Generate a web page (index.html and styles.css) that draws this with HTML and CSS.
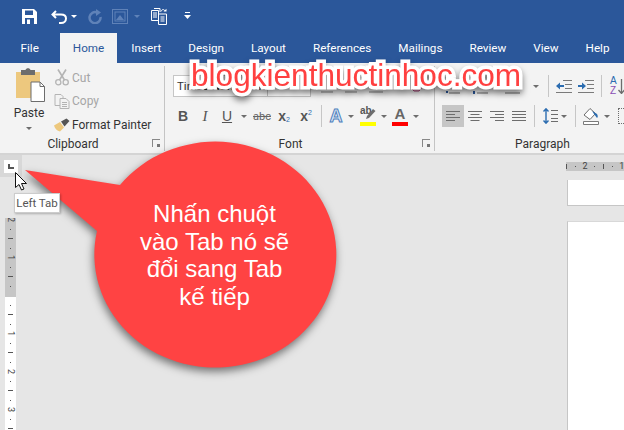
FILE: index.html
```html
<!DOCTYPE html>
<html lang="vi">
<head>
    <meta charset="UTF-8">
    <meta name="viewport" content="width=device-width, initial-scale=1.0">
    <title>Word - Left Tab</title>
    <link rel="stylesheet" href="styles.css">
</head>
<body>

<div class="app">
    <div class="qat">
        <svg class="qat-save" width="15" height="15" viewBox="0 0 15 15"><path d="M0 0H12L15 3V15H0Z" fill="#fff"/><rect x="3" y="1.5" width="8" height="4.5" fill="#2b579a"/><rect x="3" y="9" width="9" height="6" fill="#2b579a"/><rect x="5" y="10.500" width="3" height="4.500" fill="#fff"/></svg>
        <svg class="qat-undo" width="16" height="14" viewBox="0 0 16 14"><path d="M5 1L1.500 4.500L5 8M2 4.500H10C14 4.500 15 7 15 8.500C15 11 13 13 10 13H8" fill="none" stroke="#fff" stroke-width="2"/></svg>
        <span class="caret caret-white qat-caret"></span>
        <svg class="qat-redo" width="14" height="15" viewBox="0 0 14 15"><path d="M9 3.500A5.500 5.500 0 1 0 12.500 8" fill="none" stroke="#5f82b8" stroke-width="2.500"/><path d="M8 0V7L13 3.500Z" fill="#5f82b8"/></svg>
        <svg class="qat-image" width="16" height="15" viewBox="0 0 16 15"><rect x=".5" y=".5" width="15" height="14" fill="none" stroke="#5f82b8"/><rect x="3" y="3" width="10" height="9" fill="none" stroke="#5f82b8"/><path d="M4 11L8 6L12 11Z" fill="#5f82b8"/></svg>
        <span class="caret caret-dim qat-caret2"></span>
        <svg class="qat-list" width="17" height="17" viewBox="0 0 17 17"><path d="M.5 2.500H7.500V12.500H.5Z" fill="none" stroke="#fff"/><path d="M3 .5H9V4" fill="none" stroke="#fff"/><path d="M2 5H6M2 7H6M2 9H6" stroke="#fff"/><path d="M7.500 6H15.500V16.500H7.500Z" fill="#2b579a" stroke="#fff"/><path d="M9.500 9H13.500M9.500 11H13.500M9.500 13H13.500" stroke="#fff"/><path d="M10 3.500C11 1 13 1 14 3" fill="none" stroke="#fff"/><path d="M12.500 3.500H15.500V.8Z" fill="#fff"/></svg>
        <svg class="qat-custom" width="7" height="9" viewBox="0 0 7 9"><path d="M1 .5H6" stroke="#fff"/><path d="M0 3H7L3.500 7Z" fill="#fff"/></svg>
    </div>

    <div class="tabs">
        <span class="tab tab-file">File</span>
        <span class="tab tab-active">Home</span>
        <span class="tab">Insert</span>
        <span class="tab">Design</span>
        <span class="tab">Layout</span>
        <span class="tab">References</span>
        <span class="tab">Mailings</span>
        <span class="tab">Review</span>
        <span class="tab">View</span>
        <span class="tab">Help</span>
    </div>

    <div class="ribbon">
        <div class="group group-clipboard">
            <div class="group-body clip-body">
                <div class="paste">
                    <svg width="29" height="34" viewBox="0 0 29 34"><path d="M0 4H24V30H0Z" fill="#edc87e"/><path d="M5 2H9.500C10 -.5 14 -.5 14.500 2H19V7H5Z" fill="#6d6d6d"/><path d="M15 14H24L28.500 18.500V33.500H15Z" fill="#fff" stroke="#6d6d6d"/><path d="M24 14V18.500H28.500" fill="none" stroke="#6d6d6d"/></svg>
                    <span class="paste-label">Paste</span>
                    <span class="caret"></span>
                </div>
                <div class="clip-list">
                    <div class="clip-row clip-off">
                        <svg width="14" height="17" viewBox="0 0 14 17"><path d="M3 .5L9.500 11M11 .5L4.500 11" stroke="#b4b4b4" stroke-width="1.600"/><circle cx="3.300" cy="13.300" r="2.600" fill="none" stroke="#b4b4b4" stroke-width="1.300"/><circle cx="10.700" cy="13.300" r="2.600" fill="none" stroke="#b4b4b4" stroke-width="1.300"/></svg>
                        <span>Cut</span>
                    </div>
                    <div class="clip-row clip-off">
                        <svg width="15" height="15" viewBox="0 0 15 15"><path d="M.5 .5H6.500L8.500 2.500V11.500H.5Z" fill="none" stroke="#b4b4b4"/><path d="M5.500 4.500H11.500L14.500 7.500V14.500H5.500Z" fill="#f3f3f3" stroke="#b4b4b4"/><path d="M7.500 8.500H12.500M7.500 10.500H12.500M7.500 12.500H12.500" stroke="#b4b4b4"/></svg>
                        <span>Copy</span>
                    </div>
                    <div class="clip-row">
                        <svg width="16" height="14" viewBox="0 0 16 14"><path d="M0 7.500L6 4L10 9.500L6 13.500C3 13 1 10.500 0 7.500Z" fill="#edc87e"/><path d="M7 3.500L12.500 .5L15.500 3L10.500 8.500Z" fill="#555"/></svg>
                        <span>Format Painter</span>
                    </div>
                </div>
            </div>
            <div class="group-label group-label-left">Clipboard<span class="launcher"></span></div>
        </div>

        <div class="group group-font">
            <div class="group-body">
                <div class="row row-top">
                    <div class="combo combo-name">Times New Roman</div>
                    <div class="combo combo-size"></div>
                    <svg class="font-size-ticks" width="90" height="20" viewBox="0 0 90 20"><path d="M8 16H20M32 16H44M56 16H70" stroke="#8a8a8a"/></svg>
                    <svg class="font-clear" width="14" height="12" viewBox="0 0 14 12"><path d="M1 9L7 2L12 6L8 11H3Z" fill="#e6b6cc" stroke="#b0487e"/></svg>
                </div>
                <div class="row row-bottom">
                    <span class="tool tool-text font-b">B</span>
                    <span class="tool tool-text font-i">I</span>
                    <span class="tool tool-text font-u">U</span>
                    <span class="slot-caret"><span class="caret"></span></span>
                    <span class="tool font-abc">abc</span>
                    <span class="tool tool-text font-x">x<sub>2</sub></span>
                    <span class="tool tool-text font-x">x<sup>2</sup></span>
                    <span class="vsep font-sep"></span>
                    <span class="slot-a"><span class="letter-effect">A</span></span>
                    <span class="slot-caret slot-caret-sm"><span class="caret"></span></span>
                    <span class="slot-color slot-mark"><span class="mark-ab">ab</span><svg class="mark-pen" width="11" height="12" viewBox="0 0 11 12"><path d="M1 11L2 8L8 1L10.500 3L4 10Z" fill="#6d6d6d"/></svg><span class="bar bar-yellow"></span></span>
                    <span class="slot-caret"><span class="caret"></span></span>
                    <span class="slot-color slot-red"><span class="letter-a">A</span><span class="bar bar-red"></span></span>
                    <span class="slot-caret"><span class="caret"></span></span>
                </div>
            </div>
            <div class="group-label group-label-left">Font<span class="launcher"></span></div>
        </div>

        <div class="group group-para">
            <div class="group-body">
                <div class="row row-top">
                    <svg class="para-lists" width="84" height="20" viewBox="0 0 84 20"><path d="M5 17H16M33 17H44M61 17H76" stroke="#6d6d6d"/><path d="M2 16H4M30 15V18" stroke="#2b579a" stroke-width="2"/></svg>
                    <span class="caret para-caret"></span>
                    <span class="vsep sep-outdent"></span>
                    <svg class="para-outdent" width="16" height="13" viewBox="0 0 16 13"><path d="M7 .5H16M9 4.500H16M9 8.500H16M0 12.500H16" stroke="#7a7a7a"/><path d="M0 6L4 2.500V5H8V7H4V9.500Z" fill="#2b6cb0"/></svg>
                    <svg class="para-indent" width="16" height="13" viewBox="0 0 16 13"><path d="M7 .5H16M9 4.500H16M9 8.500H16M0 12.500H16" stroke="#7a7a7a"/><path d="M8 6L4 2.500V5H0V7H4V9.500Z" fill="#2b6cb0"/></svg>
                    <span class="vsep sep-sort"></span>
                    <span class="sort-az"><span class="sort-a">A</span><span class="sort-z">Z</span></span>
                    <svg class="sort-arrow" width="7" height="15" viewBox="0 0 7 15"><path d="M3.500 0V14M.5 11L3.500 14.500L6.500 11" fill="none" stroke="#6d6d6d" stroke-width="1.300"/></svg>
                </div>
                <div class="row row-bottom">
                    <span class="tool tool-selected"><svg width="14" height="11" viewBox="0 0 14 11"><path d="M0 .5H14M0 3.500H9M0 6.500H14M0 9.500H9" stroke="#6d6d6d"/></svg></span>
                    <span class="tool"><svg width="14" height="11" viewBox="0 0 14 11"><path d="M0 .5H14M2.500 3.500H11.500M0 6.500H14M2.500 9.500H11.500" stroke="#6d6d6d"/></svg></span>
                    <span class="tool"><svg width="14" height="11" viewBox="0 0 14 11"><path d="M0 .5H14M5 3.500H14M0 6.500H14M5 9.500H14" stroke="#6d6d6d"/></svg></span>
                    <span class="tool"><svg width="14" height="11" viewBox="0 0 14 11"><path d="M0 .5H14M0 3.500H14M0 6.500H14M0 9.500H14" stroke="#6d6d6d"/></svg></span>
                    <span class="vsep sep-align"></span>
                    <svg class="para-spacing" width="16" height="16" viewBox="0 0 16 16"><path d="M3 1V15M.5 3.500L3 .8L5.500 3.500M.5 12.500L3 15.200L5.500 12.500" fill="none" stroke="#2b6cb0" stroke-width="1.400"/><path d="M8 2.500H15M8 6.500H15M8 10.500H15M8 13.500H15" stroke="#6d6d6d"/></svg>
                    <span class="caret spacing-caret"></span>
                    <span class="vsep sep-spacing"></span>
                    <svg class="para-shade" width="16" height="18" viewBox="0 0 16 18"><path d="M1 8L7 1.500L12.500 6.500L7 12.500Z" fill="#fff" stroke="#6d6d6d"/><path d="M9 4L14 7C15 9 15 10 14 11L11 7Z" fill="#2b6cb0"/><path d="M.5 14.500H15.500V17.500H.5Z" fill="#fff" stroke="#7a7a7a"/></svg>
                    <span class="caret shade-caret"></span>
                    <span class="border-icon"></span>
                </div>
            </div>
            <div class="group-label group-label-para">Paragraph</div>
        </div>
    </div>

    <div class="workspace">
        <div class="side">
            <div class="tab-selector"><span class="tab-box"><span class="tab-mark"></span></span></div>
            <div class="vruler">
                <div class="vruler-gray">
                    <span class="vt vt-num">2</span><span class="vt"><i class="dot"></i></span><span class="vt"><i class="dash"></i></span><span class="vt"><i class="dot"></i></span>
                    <span class="vt vt-num">1</span><span class="vt"><i class="dot"></i></span><span class="vt"><i class="dash"></i></span><span class="vt"><i class="dot"></i></span>
                </div>
                <div class="vruler-white">
                    <span class="vt"><i class="dot"></i></span><span class="vt"><i class="dash"></i></span><span class="vt"><i class="dot"></i></span>
                    <span class="vt vt-num">1</span><span class="vt"><i class="dot"></i></span><span class="vt"><i class="dash"></i></span><span class="vt"><i class="dot"></i></span>
                    <span class="vt vt-num">2</span><span class="vt"><i class="dot"></i></span><span class="vt"><i class="dash"></i></span><span class="vt"><i class="dot"></i></span>
                    <span class="vt vt-num">3</span><span class="vt"><i class="dot"></i></span><span class="vt"><i class="dash"></i></span>
                </div>
            </div>
        </div>
        <div class="doc">
            <div class="hruler">
                <span class="ht"><i class="hdash"></i></span><span class="ht"><i class="dot"></i></span><span class="ht ht-num">2</span><span class="ht"><i class="dot"></i></span><span class="ht"><i class="hdash"></i></span><span class="ht"><i class="dot"></i></span><span class="ht ht-num">1</span>
            </div>
            <div class="page page-prev"></div>
            <div class="page page-next"></div>
        </div>
    </div>

    <div class="watermark">blogkienthuctinhoc.com</div>

    <div class="callout">
        <svg class="callout-shape" width="624" height="430" viewBox="0 0 624 430"><path d="M25 170L120 185A121 113 0 1 1 97 231Z" fill="#ff4343"/></svg>
        <div class="callout-text">Nhấn chuột<br>vào Tab nó sẽ<br>đổi sang Tab<br>kế tiếp</div>
    </div>

    <div class="tooltip">Left Tab</div>
    <svg class="cursor" width="13" height="19" viewBox="0 0 13 19"><path d="M.5 .5V15.500L4 12.500L6.500 18L9 17L6.500 11.500H11.500Z" fill="#fff" stroke="#111"/></svg>
</div>

</body>
</html>
```

FILE: styles.css
```css
body {
    margin: 0;
    font-family: Roboto, "Noto Sans", sans-serif;
    font-size: 12px;
    color: #333;
}
.app {
    position: relative;
    width: 624px;
    height: 430px;
    overflow: hidden;
    display: flex;
    flex-direction: column;
    background-color: #e6e6e6;
}
svg {
    display: block;
    flex: none;
}

/* quick access bar */
.qat {
    height: 33px;
    display: flex;
    align-items: center;
    padding-left: 22px;
    background-color: #2b579a;
}
.qat-undo { margin-left: 14px; }
.qat-caret { margin-left: 4px; }
.qat-redo { margin-left: 11px; }
.qat-image { margin-left: 10px; }
.qat-caret2 { margin-left: 6px; }
.qat-list { margin-left: 11px; }
.qat-custom { margin-left: 16px; }
.caret {
    display: inline-block;
    flex: none;
    width: 0;
    height: 0;
    border-left: 3px solid transparent;
    border-right: 3px solid transparent;
    border-top: 3px solid #6d6d6d;
}
.caret-white { border-top-color: #fff; }
.caret-dim { border-top-color: #5f82b8; }

/* tabs */
.tabs {
    height: 30px;
    display: flex;
    padding-left: 7px;
    font-size: 11.700px;
    background-color: #2b579a;
}
.tab {
    padding: 0 13.500px;
    line-height: 30px;
    color: #fff;
}
.tab-file { margin-right: 8px; }
.tab-active {
    background-color: #f3f3f3;
    color: #2b579a;
    padding: 0 12.500px;
    margin-right: 1px;
}

/* ribbon */
.ribbon {
    height: 92px;
    box-sizing: border-box;
    display: flex;
    padding: 3px 0 2px;
    background-color: #f3f3f3;
    border-bottom: 2px solid #d4d4d4;
}
.group {
    display: flex;
    flex-direction: column;
    flex: none;
    border-right: 1px solid #c4c4c4;
}
.group-clipboard { width: 164px; }
.group-font { width: 269px; }
.group-para {
    flex: 1;
    border-right: none;
    min-width: 0;
}
.group-body { height: 74px; }
.group-label {
    position: relative;
    height: 13px;
    line-height: 13px;
    text-align: center;
    color: #333;
}
.group-label-left { padding-right: 18px; }
.group-label-para { padding-left: 26px; }
.launcher {
    position: absolute;
    right: 4px;
    top: 1px;
    width: 7px;
    height: 7px;
    border-left: 1px solid #888;
    border-top: 1px solid #888;
}
.launcher::after {
    content: "";
    position: absolute;
    right: 0;
    bottom: 0;
    width: 3px;
    height: 3px;
    background-color: #777;
}

/* clipboard */
.clip-body { display: flex; }
.paste {
    width: 50px;
    margin-left: 4px;
    display: flex;
    flex-direction: column;
    align-items: center;
    padding-top: 2px;
}
.paste svg { margin-left: 2px; }
.paste-label {
    margin-top: 3px;
    line-height: 16px;
}
.paste .caret { margin-top: 6px; }
.clip-row {
    height: 23.5px;
    display: flex;
    align-items: center;
    white-space: nowrap;
}
.clip-row svg {
    width: 16px;
    margin-right: 2px;
}
.clip-off { color: #a6a6a6; }

/* font and paragraph rows */
.row {
    display: flex;
    align-items: center;
    height: 22px;
    padding-left: 7px;
}
.row-top { margin-top: 9px; }
.row-bottom { margin-top: 8px; }
.tool {
    flex: none;
    width: 22px;
    height: 22px;
    display: flex;
    align-items: center;
    justify-content: center;
}
.tool-text {
    font-family: "Liberation Sans", sans-serif;
    font-size: 13px;
    color: #555;
}
.tool-selected { background-color: #c6c6c6; }
.combo {
    flex: none;
    box-sizing: border-box;
    height: 22px;
    line-height: 20px;
    padding-left: 3px;
    background-color: #fff;
    border: 1px solid #c6c6c6;
    overflow: hidden;
    white-space: nowrap;
}
.combo-name {
    width: 95px;
    margin-left: 1px;
    font-size: 11.500px;
}
.combo-size {
    width: 43px;
    border-left: none;
    margin-right: 2px;
}
.font-clear { margin-left: 8px; }
.font-b { font-weight: bold; font-size: 14px; }
.font-i { font-style: italic; font-family: "Liberation Serif", serif; font-size: 15px; }
.font-u { text-decoration: underline; font-size: 14px; }
.font-abc {
    margin-left: 1px;
    font-size: 11px;
    color: #666;
    text-decoration: line-through;
}
.font-x { font-weight: bold; font-size: 14px; }
.font-x sub, .font-x sup {
    font-size: 7px;
    font-weight: normal;
    color: #2b6cb0;
    line-height: 8px;
}
.font-x sub {
    align-self: flex-end;
    margin-bottom: 3px;
}
.font-x sup {
    align-self: flex-start;
    margin-top: 4px;
}
.slot-caret {
    flex: none;
    width: 12px;
    display: flex;
    justify-content: center;
}
.slot-caret-sm { width: 10px; }
.vsep {
    flex: none;
    width: 1px;
    height: 22px;
    background-color: #c6c6c6;
}
.font-sep { margin: 0 4px; }
.slot-a {
    flex: none;
    width: 20px;
    text-align: center;
}
.letter-effect {
    font-family: "Liberation Sans", sans-serif;
    font-size: 18px;
    font-weight: bold;
    color: #dce6f5;
    -webkit-text-stroke: 1px #4f81bd;
}
.slot-color {
    position: relative;
    flex: none;
    width: 16px;
    height: 20px;
    margin: 0 2px;
}
.slot-mark { margin-left: 4px; }
.mark-ab {
    font-family: "Liberation Sans", sans-serif;
    font-size: 10px;
    font-weight: bold;
    line-height: 10px;
    color: #555;
    display: block;
}
.mark-pen {
    position: absolute;
    right: 0;
    top: 2px;
}
.letter-a {
    display: block;
    text-align: center;
    font-family: "Liberation Sans", sans-serif;
    font-size: 15px;
    font-weight: bold;
    line-height: 16px;
    color: #666;
}
.bar {
    position: absolute;
    left: 0;
    right: 0;
    bottom: 0;
    height: 4px;
}
.bar-yellow { background-color: #ffff00; }
.bar-red { background-color: #ff0000; }

.para-lists { margin: 0 2px; }
.para-caret { margin-left: 3px; }
.sep-outdent { margin-left: 9px; }
.para-outdent { margin-left: 7px; }
.para-indent { margin-left: 6px; }
.sep-sort { margin-left: 7px; }
.sort-az {
    margin-left: 8px;
    display: flex;
    flex-direction: column;
    font-family: "Liberation Sans", sans-serif;
    font-size: 10px;
    line-height: 10px;
}
.sort-a { color: #2b6cb0; }
.sort-z { color: #8a4fb5; }
.sort-arrow { margin-left: 1px; }
.sep-align { margin-left: 4px; }
.para-spacing { margin-left: 8px; }
.spacing-caret { margin-left: 2px; }
.sep-spacing { margin-left: 8px; }
.para-shade { margin-left: 7px; }
.shade-caret { margin-left: 5px; }
.border-icon {
    flex: none;
    width: 14px;
    height: 14px;
    margin-left: 8px;
    border: 1px dotted #6d6d6d;
}

/* rulers and page */
.workspace {
    flex: 1;
    display: flex;
    min-height: 0;
}
.side {
    flex: none;
    width: 22px;
}
.tab-selector {
    box-sizing: border-box;
    width: 22px;
    height: 22px;
    padding: 5px 4px 4px;
    background-color: #d8d8d8;
}
.tab-box {
    display: block;
    position: relative;
    width: 14px;
    height: 13px;
    background-color: #fff;
}
.tab-mark {
    position: absolute;
    left: 4px;
    top: 4px;
    width: 6px;
    height: 5px;
    border-left: 2px solid #555;
    border-bottom: 2px solid #555;
    box-sizing: border-box;
}
.vruler {
    width: 11px;
    margin: 41px 0 0 5px;
    font-size: 9px;
    color: #444;
}
.vruler-gray {
    height: 79px;
    box-sizing: border-box;
    padding-bottom: 6px;
    display: flex;
    flex-direction: column;
    justify-content: flex-end;
    overflow: hidden;
    background-color: #c6c6c6;
}
.vruler-white {
    height: 140px;
    box-sizing: border-box;
    padding-top: 3.500px;
    display: flex;
    flex-direction: column;
    background-color: #fff;
}
.vt {
    flex: none;
    height: 9.500px;
    display: flex;
    align-items: center;
    justify-content: center;
}
.vt-num {
    writing-mode: vertical-rl;
    line-height: 9.500px;
}
.dot {
    display: block;
    width: 1px;
    height: 1px;
    background-color: #555;
}
.dash {
    display: block;
    width: 5px;
    height: 1px;
    background-color: #555;
}
.hdash {
    display: block;
    width: 1px;
    height: 5px;
    background-color: #555;
}
.doc {
    flex: 1;
    min-width: 0;
    padding-top: 7px;
}
.hruler {
    height: 9px;
    margin-left: 544px;
    display: flex;
    font-size: 9px;
    line-height: 9px;
    color: #444;
    background-color: #c6c6c6;
}
.ht {
    flex: none;
    width: 9.200px;
    display: flex;
    align-items: center;
    justify-content: center;
}
.ht:first-child { margin-left: -4px; }
.page {
    margin-left: 545px;
    background-color: #fff;
    border-left: 1px solid #c6c6c6;
    border-top: 1px solid #d8d8d8;
}
.page-prev {
    height: 25px;
    margin-top: 9px;
    border-top: none;
    border-bottom: 1px solid #c6c6c6;
}
.page-next {
    height: 220px;
    margin-top: 15px;
}

/* things lying over the window */
.watermark {
    position: absolute;
    left: 191px;
    top: 56px;
    font-family: "Liberation Sans", Arial, sans-serif;
    font-size: 31.600px;
    line-height: 38px;
    white-space: nowrap;
    color: #ff4040;
    -webkit-text-stroke: 7px #fff;
    paint-order: stroke fill;
    filter: drop-shadow(0 4px 3px rgba(0, 0, 0, 0.5));
}
.callout {
    position: absolute;
    left: 0;
    top: 0;
}
.callout-shape {
    filter: drop-shadow(-1px 4px 4px rgba(0, 0, 0, 0.5));
}
.callout-text {
    position: absolute;
    left: 124.500px;
    top: 200px;
    width: 180px;
    font-family: "Liberation Sans", Arial, sans-serif;
    font-size: 24px;
    line-height: 27.500px;
    text-align: center;
    color: #fff;
}
.tooltip {
    position: absolute;
    left: 14px;
    top: 193px;
    box-sizing: border-box;
    width: 46px;
    height: 20px;
    line-height: 18px;
    font-size: 11.500px;
    text-align: center;
    white-space: nowrap;
    color: #555;
    background-color: #fff;
    border: 1px solid #ccc;
    box-shadow: 1px 1px 2px rgba(0, 0, 0, 0.25);
}
.cursor {
    position: absolute;
    left: 15px;
    top: 172px;
}
```
